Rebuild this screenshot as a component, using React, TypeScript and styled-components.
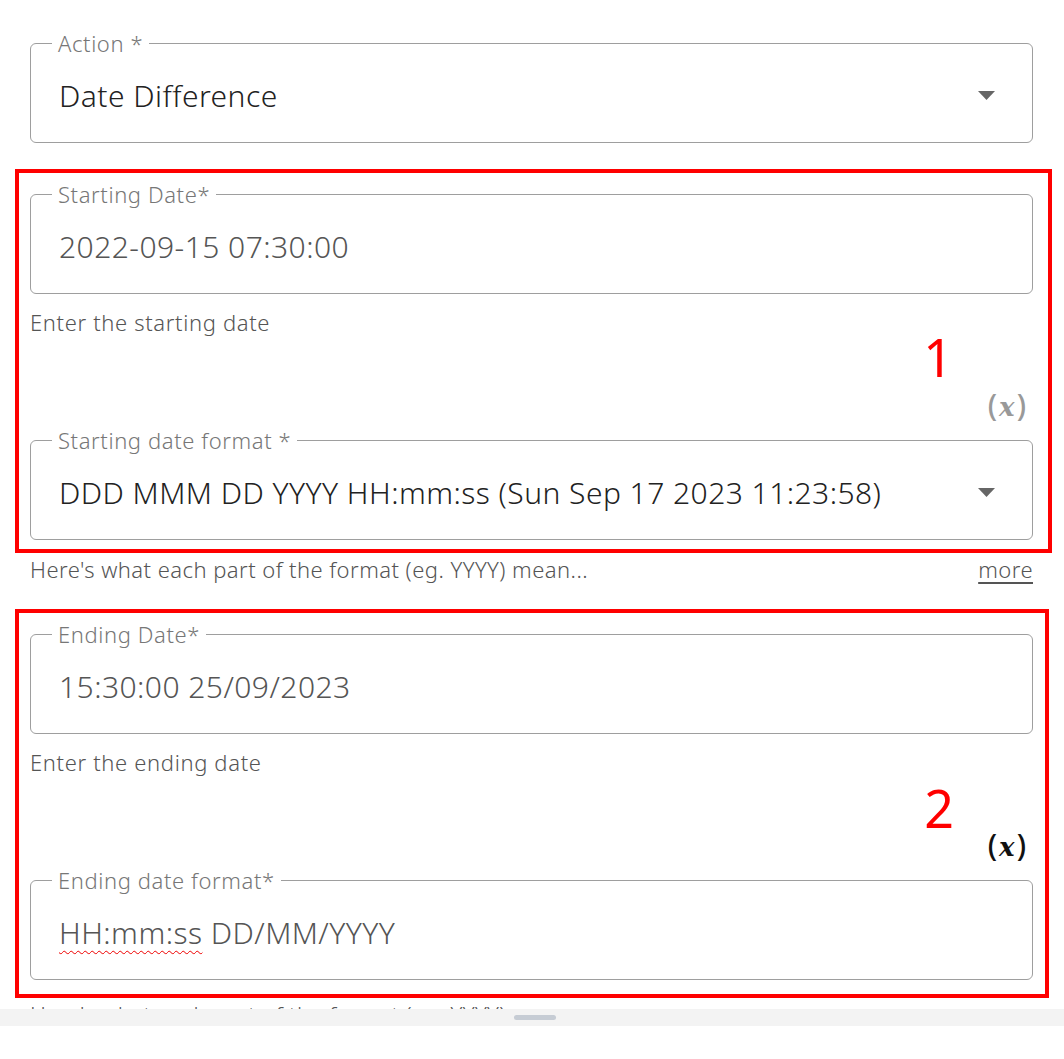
import styled, { createGlobalStyle } from "styled-components";

const GlobalStyle = createGlobalStyle`
  html, body {
    margin: 0;
    padding: 0;
    background: #fff;
  }
  body {
    font-family: "Noto Sans", "Open Sans", sans-serif;
    color: #333;
  }
`

const Viewport = styled.div`
  height: 1009px;
  overflow: hidden;
  box-sizing: border-box;
  padding: 30px 31px 0 30px;
`

const BottomBar = styled.div`
  height: 17px;
  background: #f3f3f3;
  display: flex;
  align-items: center;
  justify-content: center;
  padding-left: 6px;
`

const Handle = styled.div`
  width: 42px;
  height: 5px;
  border-radius: 3px;
  background: #c6ccd4;
`

const Field = styled.fieldset`
  margin: 0;
  padding: 0 28px;
  border: 1px solid #9e9e9e;
  border-radius: 6px;
  min-width: 0;
`

const Legend = styled.legend`
  margin-left: -7px;
  padding: 0 6px;
  font-size: 22px;
  line-height: 26px;
  letter-spacing: 0.6px;
  font-weight: 350;
  color: #777;
`

const ValueRow = styled.div`
  height: 78px;
  margin-bottom: 8px;
  display: flex;
  align-items: center;
  justify-content: space-between;
`

const Value = styled.div<{ $muted?: boolean }>`
  font-size: 30px;
  letter-spacing: 0.45px;
  font-weight: 350;
  color: ${(p) => (p.$muted ? "#555" : "#222")};
  white-space: nowrap;
`

const Misspelled = styled.span`
  text-decoration: underline wavy #e00;
  text-decoration-thickness: 1px;
  text-underline-offset: 6px;
  text-decoration-skip-ink: none;
`

const Caret = styled.svg`
  width: 17px;
  height: 9px;
  margin-right: 9px;
  flex: none;
`

const Helper = styled.div`
  font-size: 22px;
  line-height: 28px;
  letter-spacing: 0.65px;
  font-weight: 350;
  color: #555;
  margin-top: 14px;
`

const FormatHelp = styled.div`
  display: flex;
  justify-content: space-between;
  font-size: 22px;
  line-height: 28px;
  letter-spacing: 0.45px;
  font-weight: 350;
  color: #555;
  margin: 2px 0 25px;
  white-space: nowrap;

  a {
    color: #555;
    text-decoration: underline;
    text-underline-offset: 4px;
  }
`

const Annotated = styled.div<{ $padRight: number; $padBottom: number }>`
  position: relative;
  margin: 26px -${(p) => p.$padRight}px 0 -15px;
  border: 4px solid #ff0000;
  padding: 8px ${(p) => p.$padRight - 4}px ${(p) => p.$padBottom}px 11px;
`

const Marker = styled.div<{ $top: number; $right: number }>`
  position: absolute;
  top: ${(p) => p.$top}px;
  right: ${(p) => p.$right}px;
  font-size: 52px;
  line-height: 52px;
  color: #ff0000;
`

const VarRow = styled.div`
  display: flex;
  justify-content: flex-end;
  margin: 52px 0 3px;
  padding-right: 7px;
`

const VarButton = styled.button<{ $active?: boolean }>`
  border: 0;
  background: none;
  padding: 0;
  font-family: "Noto Sans", sans-serif;
  font-size: 30px;
  line-height: 34px;
  font-weight: 500;
  color: ${(p) => (p.$active ? "#111" : "#999")};
  cursor: pointer;

  i {
    font-family: "DejaVu Serif", serif;
    font-style: italic;
    font-weight: 700;
    font-size: 26px;
    margin: 0 2px;
  }
`

const DropCaret = () => (
  <Caret viewBox="0 0 17 9">
    <path d="M0 0h17l-8.5 9z" fill="#666" />
  </Caret>
)

type InputProps = {
  label: string
  value: React.ReactNode
  select?: boolean
  muted?: boolean
}

const OutlinedInput = ({ label, value, select, muted }: InputProps) => (
  <Field>
    <Legend>{label}</Legend>
    <ValueRow>
      <Value $muted={muted}>{value}</Value>
      {select && <DropCaret />}
    </ValueRow>
  </Field>
)

type DateBlockProps = {
  n: number
  dateLabel: string
  dateValue: string
  helper: string
  formatLabel: string
  formatValue: React.ReactNode
  formatIsSelect?: boolean
  varActive?: boolean
  padRight: number
  padBottom: number
  markerTop: number
  markerRight: number
}

const DateBlock = (p: DateBlockProps) => (
  <Annotated $padRight={p.padRight} $padBottom={p.padBottom}>
    <OutlinedInput label={p.dateLabel} value={p.dateValue} muted />
    <Helper>{p.helper}</Helper>
    <VarRow>
      <VarButton $active={p.varActive}>(<i>x</i>)</VarButton>
    </VarRow>
    <OutlinedInput
      label={p.formatLabel}
      value={p.formatValue}
      select={p.formatIsSelect}
      muted={!p.formatIsSelect}
    />
    <Marker $top={p.markerTop} $right={p.markerRight}>{p.n}</Marker>
  </Annotated>
)

const MoreLine = () => (
  <FormatHelp>
    <span>Here's what each part of the format (eg. YYYY) mean...</span>
    <a href="#">more</a>
  </FormatHelp>
)

export default function App() {
  return (
    <>
      <GlobalStyle />
      <Viewport>
        <OutlinedInput label="Action *" value="Date Difference" select />
        <DateBlock
          n={1}
          dateLabel="Starting Date*"
          dateValue="2022-09-15 07:30:00"
          helper="Enter the starting date"
          formatLabel="Starting date format *"
          formatValue="DDD MMM DD YYYY HH:mm:ss (Sun Sep 17 2023 11:23:58)"
          formatIsSelect
          padRight={19}
          padBottom={9}
          markerTop={158}
          markerRight={95}
        />
        <MoreLine />
        <DateBlock
          n={2}
          dateLabel="Ending Date*"
          dateValue="15:30:00 25/09/2023"
          helper="Enter the ending date"
          formatLabel="Ending date format*"
          formatValue={<><Misspelled>HH:mm:ss</Misspelled> DD/MM/YYYY</>}
          varActive
          padRight={16}
          padBottom={14}
          markerTop={169}
          markerRight={91}
        />
        <MoreLine />
      </Viewport>
      <BottomBar>
        <Handle />
      </BottomBar>
    </>
  )
}
